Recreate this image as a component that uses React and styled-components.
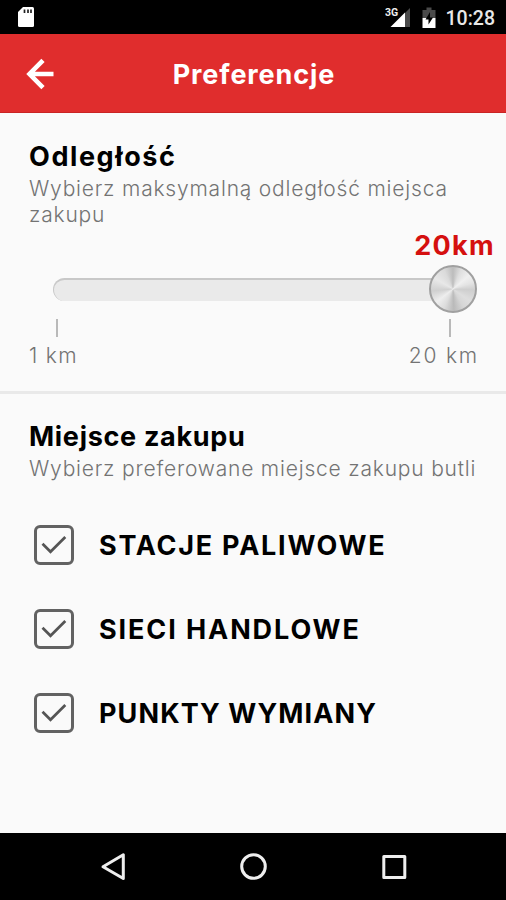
import React, { useState } from 'react';
import styled, { createGlobalStyle } from 'styled-components';

const GlobalStyle = createGlobalStyle`
  * {
    box-sizing: border-box;
  }

  body {
    margin: 0;
    background: #fafafa;
    font-family: Inter, "Liberation Sans", sans-serif;
  }
`;

// Styled Components
const Screen = styled.div`
  display: flex;
  flex-direction: column;
  width: 506px;
  height: 900px;
  overflow: hidden;
  background: #fafafa;
`;

const StatusBar = styled.div`
  display: flex;
  justify-content: space-between;
  height: 34px;
  padding: 0 11px 0 17px;
  background: #000;
`;

const StatusGroup = styled.div`
  display: flex;
  align-items: center;
`;

const BatteryIcon = styled.svg`
  margin-left: 10px;
`;

const Clock = styled.span`
  margin-left: 9px;
  padding-top: 3px;
  color: #e8e8e8;
  font-family: Roboto, sans-serif;
  font-size: 19.5px;
  font-weight: 500;
  line-height: 34px;
`;

const Header = styled.header`
  display: grid;
  grid-template-columns: 80px 1fr 80px;
  align-items: center;
  height: 79px;
  background: #e02d2d;
  border-bottom: 1px solid #c92424;
`;

const BackButton = styled.button`
  display: flex;
  height: 78px;
  padding: 1px 0 0 26px;
  align-items: center;
  border: 0;
  background: none;
`;

const HeaderTitle = styled.h1`
  margin: 0;
  padding: 3px 0 0 2px;
  color: #fff;
  font-size: 27px;
  font-weight: 700;
  line-height: 32px;
  letter-spacing: 0.9px;
  text-align: center;
`;

const Section = styled.section`
  padding: ${({ $divided }) => ($divided ? '28px 29px 0' : '27px 29px 0')};
  border-bottom: ${({ $divided }) => ($divided ? '3px solid #e9e9e9' : '0')};
  height: ${({ $divided }) => ($divided ? '281px' : 'auto')};
`;

const SectionTitle = styled.h2`
  margin: 0;
  color: #000;
  font-size: 27px;
  font-weight: 700;
  line-height: 32px;
  letter-spacing: ${({ $spacing }) => $spacing};
`;

const Description = styled.p`
  margin: 3px -20px 0 0;
  color: #737373;
  font-size: 21px;
  font-weight: 300;
  line-height: 26px;
  letter-spacing: 0.8px;
`;

const DistanceValue = styled.div`
  margin: 4px -18px 0 0;
  color: #d5100f;
  font-size: 27px;
  font-weight: 700;
  line-height: 28px;
  letter-spacing: 1.3px;
  text-align: right;
`;

const Slider = styled.div`
  display: flex;
  align-items: center;
  height: 48px;
  margin: 5px 0 0 24px;
`;

const Track = styled.div`
  flex: 1;
  height: 23px;
  margin-right: -24px;
  border-top: 2px solid #c8c8c8;
  border-left: 1px solid #c8c8c8;
  border-radius: 12px 0 0 12px;
  background: #eaeaea;
`;

const Knob = styled.div`
  flex: none;
  width: 48px;
  height: 48px;
  border: 2px solid #a0a0a0;
  border-radius: 50%;
  background: conic-gradient(
    #bcbcbc 0deg,
    #dedede 22deg,
    #f0f0f0 50deg,
    #e4e4e4 72deg,
    #cecece 92deg,
    #dedede 125deg,
    #d6d6d6 150deg,
    #bababa 178deg,
    #dcdcdc 205deg,
    #eeeeee 232deg,
    #d0d0d0 265deg,
    #e8e8e8 300deg,
    #dadada 335deg,
    #bcbcbc 360deg
  );
`;

const Scale = styled.div`
  display: flex;
  justify-content: space-between;
  margin: 6px -2px 0 0;
`;

const ScaleMark = styled.div`
  display: flex;
  flex-direction: column;
  align-items: ${({ $end }) => ($end ? 'flex-end' : 'flex-start')};
  color: #737373;
  font-size: 21px;
  font-weight: 300;
  line-height: 26px;
  letter-spacing: ${({ $end }) => ($end ? '1.8px' : '1.3px')};
  white-space: nowrap;
`;

const Tick = styled.span`
  width: 2px;
  height: 18px;
  margin: ${({ $end }) => ($end ? '0 28px 6px 0' : '0 0 6px 27px')};
  background: #b9b9b9;
`;

const OptionList = styled.div`
  display: flex;
  flex-direction: column;
  gap: 44px;
  margin-top: 43px;
  padding-left: 5px;
`;

const Option = styled.label`
  display: flex;
  align-items: center;
  gap: 25px;
  height: 40px;
`;

const Box = styled.span`
  display: flex;
  flex: none;
  width: 40px;
  height: 40px;
  border: 3px solid #626262;
  border-radius: 6px;
`;

const HiddenInput = styled.input`
  display: none;
`;

const OptionLabel = styled.span`
  padding-top: 2px;
  color: #000;
  font-size: 27px;
  font-weight: 700;
  line-height: 32px;
  letter-spacing: ${({ $spacing }) => $spacing};
  white-space: nowrap;
`;

const NavBar = styled.nav`
  display: flex;
  flex: none;
  justify-content: space-between;
  height: 67px;
  margin-top: auto;
  padding: 19px 97px 0 98px;
  background: #000;
`;

const places = [
  { id: 'stations', label: 'STACJE PALIWOWE', spacing: '1.75px' },
  { id: 'chains', label: 'SIECI HANDLOWE', spacing: '1.9px' },
  { id: 'exchange', label: 'PUNKTY WYMIANY', spacing: '1.1px' }
];

function Checkbox({ label, spacing }) {
  const [checked, setChecked] = useState(true);

  return (
    <Option>
      <HiddenInput type="checkbox" checked={checked} onChange={() => setChecked(!checked)} />
      <Box>
        {checked && (
          <svg width="34" height="34" viewBox="0 0 34 34" fill="none" stroke="#555" strokeWidth="2.7">
            <path d="M5.5 15.8 13.5 23.8 28.3 9" />
          </svg>
        )}
      </Box>
      <OptionLabel $spacing={spacing}>{label}</OptionLabel>
    </Option>
  );
}

function App() {
  return (
    <>
      <GlobalStyle />
      <Screen>
        <StatusBar>
          <StatusGroup>
            <svg width="18" height="22" viewBox="0 0 18 22">
              <path d="M6 1h9.5A1.5 1.5 0 0 1 17 2.5v17a1.5 1.5 0 0 1-1.5 1.5h-13A1.5 1.5 0 0 1 1 19.5V6z" fill="#fff" />
              <path d="M7.5 3.5V7M11 3.5V7M14 3.5V7" stroke="#222" strokeWidth="1.7" />
            </svg>
          </StatusGroup>
          <StatusGroup>
            <svg width="26" height="34" viewBox="0 0 26 34">
              <path d="M20 13 25 8v19h-5z" fill="#4a4a4a" />
              <path d="M20 12.5V27H5.5z" fill="#fff" />
              <text x="0" y="16" fill="#eee" fontFamily="Roboto, sans-serif" fontSize="10.5" fontWeight="700">3G</text>
            </svg>
            <BatteryIcon width="16" height="34" viewBox="0 0 16 34">
              <path d="M5.5 7.5h5V10h4v8h-13v-8h4z" fill="#4a4a4a" />
              <path d="M1.5 18h13v10h-13z" fill="#fff" />
              <path d="M9 12 4.5 19.5h3v5L12 17.5H9z" fill="#000" />
            </BatteryIcon>
            <Clock>10:28</Clock>
          </StatusGroup>
        </StatusBar>

        <Header>
          <BackButton aria-label="Wstecz">
            <svg width="28" height="32" viewBox="0 0 28 32" fill="none" stroke="#fff" strokeWidth="4.6">
              <path d="M17 2.3 3.5 16 17 29.7M3.5 16h24" />
            </svg>
          </BackButton>
          <HeaderTitle>Preferencje</HeaderTitle>
        </Header>

        <Section $divided>
          <SectionTitle $spacing="1.6px">Odległość</SectionTitle>
          <Description>
            Wybierz maksymalną odległość miejsca
            <br />
            zakupu
          </Description>
          <DistanceValue>20km</DistanceValue>
          <Slider>
            <Track />
            <Knob />
          </Slider>
          <Scale>
            <ScaleMark>
              <Tick />
              1 km
            </ScaleMark>
            <ScaleMark $end>
              <Tick $end />
              20 km
            </ScaleMark>
          </Scale>
        </Section>

        <Section>
          <SectionTitle $spacing="0.7px">Miejsce zakupu</SectionTitle>
          <Description>Wybierz preferowane miejsce zakupu butli</Description>
          <OptionList>
            {places.map((place) => (
              <Checkbox key={place.id} label={place.label} spacing={place.spacing} />
            ))}
          </OptionList>
        </Section>

        <NavBar>
          <svg width="30" height="30" viewBox="0 0 30 30" fill="none" stroke="#eee" strokeWidth="3" strokeLinejoin="round">
            <path d="M5 14.7 25.3 2.8v23.7z" />
          </svg>
          <svg width="30" height="30" viewBox="0 0 30 30" fill="none" stroke="#eee" strokeWidth="3">
            <circle cx="14.5" cy="14.5" r="11.8" />
          </svg>
          <svg width="30" height="30" viewBox="0 0 30 30" fill="none" stroke="#eee" strokeWidth="3" strokeLinejoin="round">
            <path d="M4.8 4.5h21v21h-21z" />
          </svg>
        </NavBar>
      </Screen>
    </>
  );
}

export default App;
